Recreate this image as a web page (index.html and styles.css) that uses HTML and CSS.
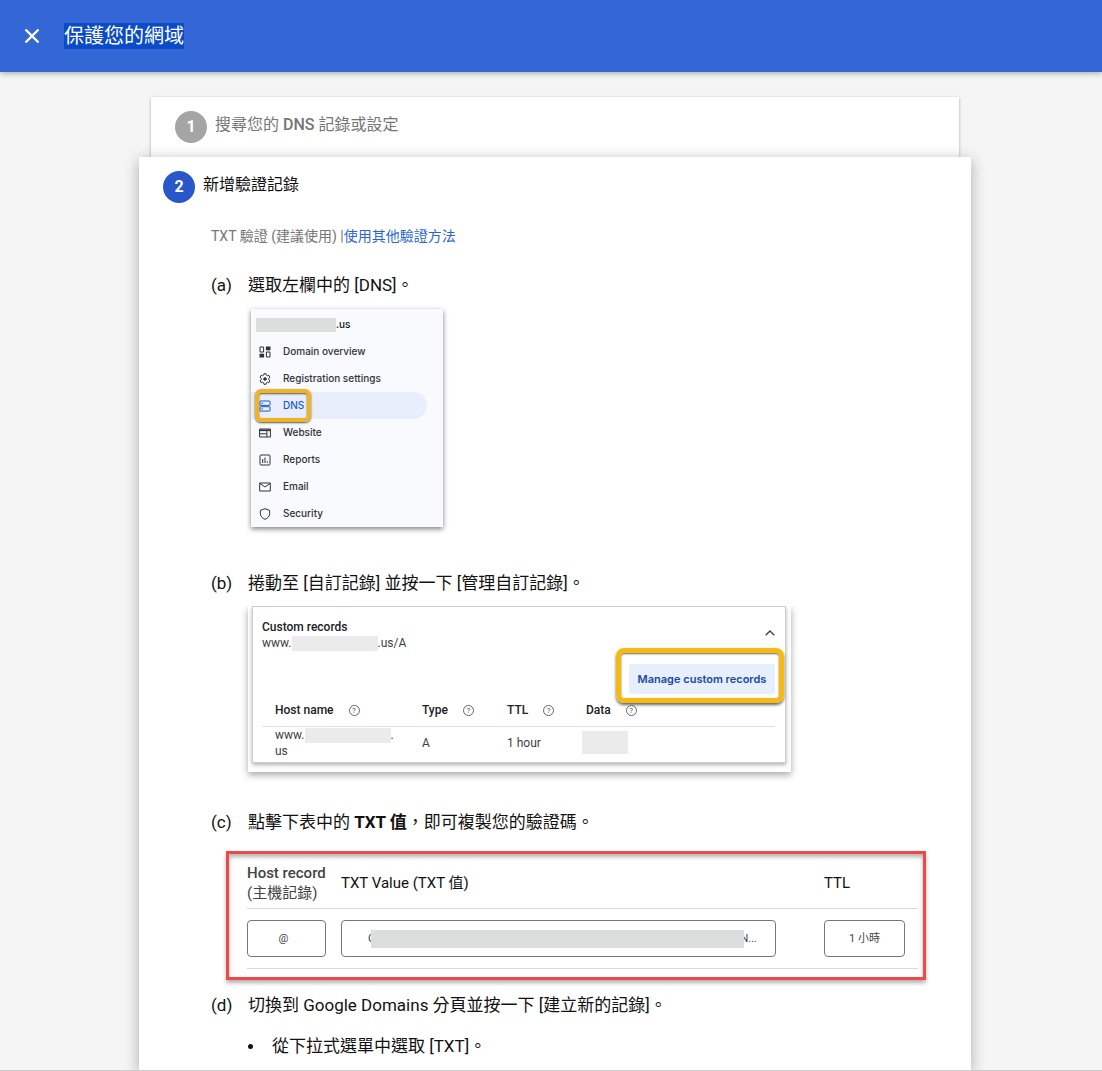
FILE: index.html
```html
<!DOCTYPE html>
<html lang="zh-Hant-TW">
<head>
  <meta charset="UTF-8">
  <meta name="viewport" content="width=device-width, initial-scale=1.0">
  <title>保護您的網域</title>
  <link rel="stylesheet" href="styles.css">
</head>
<body>
  <header class="topbar">
    <button type="button" class="close" aria-label="關閉">
      <svg width="16" height="16" viewBox="0 0 16 16" fill="none" stroke="currentColor" stroke-width="2.4"><path d="M1.5 1.5l13 13M14.5 1.5l-13 13"/></svg>
    </button>
    <h1><span class="selected">保護您的網域</span></h1>
  </header>

  <main>
    <section class="step step-done">
      <div class="step-head">
        <span class="num">1</span>
        <h2>搜尋您的 <b>DNS</b> 記錄或設定</h2>
      </div>
    </section>

    <section class="step step-active">
      <div class="step-head">
        <span class="num">2</span>
        <h2>新增驗證記錄</h2>
      </div>

      <div class="step-body">
        <p class="method">TXT 驗證 (建議使用) |<a href="#">使用其他驗證方法</a></p>

        <ol class="tasks">
          <li>
            <span class="mark">(a)</span>
            <div class="task">
              <p>選取左欄中的 [DNS]。</p>
              <nav class="shot-menu">
                <div class="domain"><span class="mask mask-domain"></span>.us</div>
                <a href="#">
                  <svg viewBox="0 0 12 12" fill="none" stroke="currentColor"><path d="M1 1h3.6v5H1zM7.4 6H11v5H7.4z"/><path d="M6.9.5h4.6v3.8H6.9zM.5 7.7h4.6v3.8H.5z" fill="currentColor" stroke="none"/></svg>
                  Domain overview
                </a>
                <a href="#">
                  <svg viewBox="0 0 12 12" fill="none" stroke="currentColor"><path d="M5 .7h2l.4 1.5 1 .6 1.5-.5 1 1.8L9.8 5.300v1.400l1.100 1.200-1 1.800-1.500-.5-1 .6L7 11.300H5l-.4-1.500-1-.6-1.500.5-1-1.800 1.100-1.200V5.300L1.100 4.100l1-1.800 1.500.5 1-.6z"/><circle cx="6" cy="6" r="1.300" fill="currentColor"/></svg>
                  Registration settings
                </a>
                <a href="#" class="current">
                  <svg viewBox="0 0 12 12" fill="none" stroke="currentColor"><rect x="1" y="1" width="10" height="4.400" rx=".5"/><rect x="1" y="6.700" width="10" height="4.400" rx=".5"/><path d="M2.500 3.200h1.500M2.500 8.900h1.500"/></svg>
                  DNS
                </a>
                <a href="#">
                  <svg viewBox="0 0 12 12" fill="none" stroke="currentColor"><path d="M.6 2h10.800v8H.6z"/><path d="M.6 3.300h10.800" stroke-width="1.600"/><path d="M.6 6.800h7M7.900 4v6"/></svg>
                  Website
                </a>
                <a href="#">
                  <svg viewBox="0 0 12 12" fill="none" stroke="currentColor"><rect x="1" y="1" width="10" height="10" rx="1"/><path d="M3.700 5v4M6 3.500V9M8.300 7.300V9"/></svg>
                  Reports
                </a>
                <a href="#">
                  <svg viewBox="0 0 12 12" fill="none" stroke="currentColor"><path d="M.7 2h10.600v8H.7zM.7 2.300L6 6l5.300-3.700"/></svg>
                  Email
                </a>
                <a href="#">
                  <svg viewBox="0 0 12 12" fill="none" stroke="currentColor"><path d="M6 .7l4.600 1.700v3.200c0 2.700-1.900 4.800-4.600 5.700C3.300 10.400 1.400 8.300 1.400 5.600V2.400z"/></svg>
                  Security
                </a>
              </nav>
            </div>
          </li>

          <li>
            <span class="mark">(b)</span>
            <div class="task">
              <p>捲動至 [自訂記錄] 並按一下 [管理自訂記錄]。</p>
              <div class="shot-records">
                <div class="records">
                  <div class="records-head">
                    <div>
                      <h3>Custom records</h3>
                      <div class="host">www.<span class="mask mask-host"></span>.us/A</div>
                    </div>
                    <svg width="10" height="6" viewBox="0 0 10 6" fill="none" stroke="currentColor" stroke-width="1.300"><path d="M.7 5.300L5 1l4.300 4.300"/></svg>
                  </div>
                  <div class="manage">
                    <button type="button">Manage custom records</button>
                  </div>
                  <table>
                    <thead>
                      <tr>
                        <th class="col-host">Host name <span class="help">?</span></th>
                        <th class="col-type">Type <span class="help">?</span></th>
                        <th class="col-ttl">TTL <span class="help">?</span></th>
                        <th>Data <span class="help">?</span></th>
                      </tr>
                    </thead>
                    <tbody>
                      <tr>
                        <td class="col-host">www.<span class="mask mask-host"></span>.<br>us</td>
                        <td>A</td>
                        <td>1 hour</td>
                        <td><span class="mask mask-data"></span></td>
                      </tr>
                    </tbody>
                  </table>
                </div>
              </div>
            </div>
          </li>

          <li>
            <span class="mark">(c)</span>
            <div class="task">
              <p>點擊下表中的 <b>TXT 值</b>，即可複製您的驗證碼。</p>
              <div class="txt-box">
                <table>
                  <thead>
                    <tr>
                      <th class="col-record"><b>Host record</b><br>(主機記錄)</th>
                      <th>TXT Value (TXT 值)</th>
                      <th class="col-time">TTL</th>
                    </tr>
                  </thead>
                  <tbody>
                    <tr>
                      <td><button type="button">@</button></td>
                      <td class="value"><button type="button">C<span class="mask mask-value"></span>N...</button></td>
                      <td><button type="button">1 小時</button></td>
                    </tr>
                  </tbody>
                </table>
              </div>
            </div>
          </li>

          <li>
            <span class="mark">(d)</span>
            <div class="task">
              <p>切換到 Google Domains 分頁並按一下 [建立新的記錄]。</p>
              <ul>
                <li>從下拉式選單中選取 [TXT]。</li>
              </ul>
            </div>
          </li>
        </ol>
      </div>
    </section>
  </main>
</body>
</html>
```

FILE: styles.css
```css
*, *::before, *::after {
  box-sizing: border-box;
}
body {
  display: flex;
  flex-direction: column;
  min-height: 100vh;
  margin: 0;
  border-bottom: 1px solid #ccc;
  background: #f5f5f5;
  color: #111;
  font-family: Roboto, "Noto Sans CJK TC", sans-serif;
  font-size: 17px;
  line-height: 24px;
}
h1, h2, h3, p, ol, ul {
  margin: 0;
  padding: 0;
  font-weight: 400;
}
button {
  font-family: inherit;
  cursor: pointer;
}
a {
  color: #2a66d1;
  text-decoration: none;
}
table {
  width: 100%;
  border-collapse: collapse;
  table-layout: fixed;
}
th, td {
  padding: 0;
  text-align: left;
  font-weight: 400;
}

/* Top bar */
.topbar {
  display: flex;
  align-items: center;
  gap: 24px;
  height: 72px;
  padding: 0 24px;
  background: #3367d6;
  box-shadow: 0 1px 6px rgba(0, 0, 0, 0.35);
  color: #fff;
}
.close {
  display: flex;
  padding: 0;
  border: none;
  background: none;
  color: #fff;
}
.topbar h1 {
  font-size: 20px;
  line-height: 26px;
}
.selected {
  display: block;
  background: #0b4bc8;
}

/* Steps */
main {
  display: flex;
  flex: 1;
  flex-direction: column;
  width: 100%;
  max-width: 840px;
  margin: 0 auto;
  padding: 25px 0 0 8px;
}
.step {
  background: #fff;
}
.step-done {
  height: 60px;
  margin: 0 12px;
  box-shadow: 0 1px 3px rgba(0, 0, 0, 0.3);
  color: #757575;
}
.step-active {
  position: relative;
  flex: 1;
  box-shadow: 0 3px 14px rgba(0, 0, 0, 0.3);
  clip-path: inset(-20px -20px 0 -20px);
}
.step-head {
  display: flex;
  gap: 8px;
  padding: 14px 24px 0;
}
.step-head h2 {
  font-size: 16px;
  line-height: 28px;
}
.step-head b {
  font-weight: 500;
}
.num {
  width: 32px;
  height: 32px;
  border-radius: 50%;
  background: #2956c8;
  color: #fff;
  font-size: 16px;
  font-weight: 700;
  line-height: 32px;
  text-align: center;
}
.step-done .num {
  background: #a5a5a5;
}
.step-body {
  padding: 21px 45px 8px 72px;
}
.method {
  margin-bottom: 25px;
  color: #757575;
  font-size: 14px;
}

/* Task list */
.tasks {
  list-style: none;
}
.tasks > li {
  display: flex;
}
.mark {
  flex: none;
  width: 37px;
}
.task {
  flex: 1;
  min-width: 0;
}
.task ul {
  margin-top: 17px;
  list-style: none;
}
.task ul li {
  display: flex;
  align-items: center;
}
.task ul li::before {
  content: "";
  width: 5px;
  height: 5px;
  margin-right: 19px;
  border-radius: 50%;
  background: #111;
}
.mask {
  display: inline-block;
  background: #dcdddd;
  vertical-align: middle;
}

/* Domain menu */
.shot-menu {
  width: 192px;
  margin: 12px 0 44px 3px;
  padding-top: 1px;
  background: #f8fafd;
  box-shadow: 0 2px 5px rgba(0, 0, 0, 0.5);
  font-family: Inter, sans-serif;
  font-size: 10px;
  font-weight: 500;
  line-height: 27px;
}
.shot-menu a {
  position: relative;
  display: flex;
  align-items: center;
  gap: 12px;
  margin-right: 16px;
  padding-left: 8px;
  border-radius: 0 14px 14px 0;
  color: #303236;
}
.shot-menu svg {
  width: 12px;
  height: 12px;
}
.shot-menu .current {
  background: #e8eefb;
  color: #1a56d0;
}
.shot-menu .current::after {
  content: "";
  position: absolute;
  top: -3px;
  left: 4px;
  width: 56px;
  height: 33px;
  border: 4px solid #f0b323;
  border-radius: 6px;
  box-shadow: 0 1px 2px #555, inset 0 1px 2px #555;
}
.domain {
  padding-left: 5px;
  line-height: 28px;
}
.mask-domain {
  width: 80px;
  height: 14px;
}

/* Custom records */
.shot-records {
  width: 543px;
  margin: 11px 0 38px;
  padding: 0 5px 9px 4px;
  box-shadow: 0 3px 7px rgba(0, 0, 0, 0.35);
  clip-path: inset(0 -12px -12px -12px);
  color: #3c4043;
  font-size: 12px;
  line-height: 16px;
}
.records {
  padding: 12px 10px 3px 9px;
  border: 1px solid #ccc;
  box-shadow: 0 2px 4px rgba(0, 0, 0, 0.3);
}
.records-head {
  display: flex;
  align-items: flex-start;
  justify-content: space-between;
}
.records-head svg {
  margin-top: 11px;
}
.records h3 {
  color: #202124;
  font-size: 12px;
  font-weight: 500;
}
.records .mask {
  background: #ebebeb;
}
.mask-host {
  width: 86px;
  height: 15px;
}
.mask-data {
  width: 46px;
  height: 23px;
  margin-left: -4px;
}
.manage {
  position: relative;
  width: 146px;
  margin: 13px 0 0 auto;
}
.manage button {
  width: 100%;
  height: 30px;
  padding: 0;
  border: none;
  border-radius: 2px;
  background: #e6effb;
  color: #2049a0;
  font-family: Inter, sans-serif;
  font-size: 11px;
  font-weight: 600;
}
.manage::after {
  content: "";
  position: absolute;
  inset: -16px -9px -9px -13px;
  border: 5px solid #f7b90f;
  border-radius: 8px;
  box-shadow: 0 2px 3px #666, inset 0 1px 2px #666;
  pointer-events: none;
}
.records th {
  height: 32px;
  border-bottom: 1px solid #e0e0e0;
  color: #202124;
  font-weight: 500;
}
.records .col-host {
  width: 160px;
  padding-left: 13px;
}
.col-type {
  width: 85px;
}
.col-ttl {
  width: 79px;
}
.help {
  display: inline-block;
  width: 11px;
  height: 11px;
  margin-left: 12px;
  border: 1px solid #666;
  border-radius: 50%;
  color: #555;
  font-size: 8px;
  font-weight: 400;
  line-height: 9px;
  text-align: center;
  vertical-align: middle;
}

/* TXT record */
.txt-box {
  margin: 17px 0 13px -22px;
  padding: 4px 5px 8px 18px;
  border: 3px solid #ee4848;
  box-shadow: 0 3px 4px rgba(0, 0, 0, 0.3), inset 0 3px 4px rgba(0, 0, 0, 0.3);
}
.txt-box th {
  padding: 5px 0;
  border-bottom: 1px solid #dadada;
  font-size: 15px;
  line-height: 20px;
}
.txt-box .col-record {
  width: 94px;
  color: #444;
}
.col-record b {
  font-weight: 500;
}
.txt-box .col-time {
  width: 94px;
}
.txt-box td {
  padding: 11px 15px 11px 0;
  border-bottom: 1px solid #dadada;
}
.txt-box .value {
  padding-right: 48px;
}
.txt-box td:last-child {
  padding-right: 13px;
}
.txt-box button {
  display: flex;
  align-items: center;
  justify-content: center;
  width: 100%;
  height: 37px;
  padding: 0 18px 0 12px;
  border: 1px solid #777;
  border-radius: 4px;
  background: #fff;
  color: #444;
  font-size: 11px;
  line-height: 16px;
}
.txt-box .value button {
  padding: 0 18px 0 26px;
}
.txt-box td:last-child button {
  padding: 0 12px;
}
.mask-value {
  flex: 1;
  height: 18px;
  margin: 0 -4px;
  z-index: 1;
}
```
